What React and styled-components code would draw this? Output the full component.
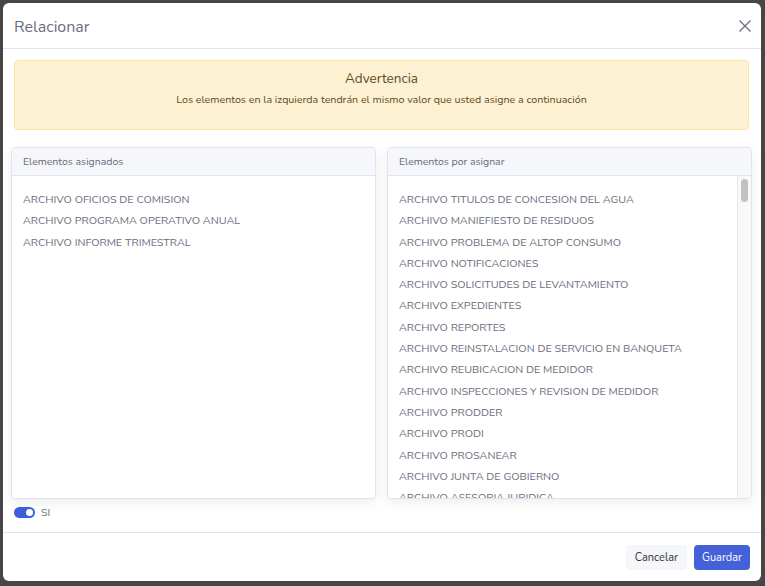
import styled, { createGlobalStyle } from "styled-components";
import { useState } from "react";

const GlobalStyle = createGlobalStyle`
  html, body {
    margin: 0;
    padding: 0;
    background: #464646;
    font-family: "Nunito", Lato, "Open Sans", sans-serif;
  }
`;

const Overlay = styled.div`
  width: 765px;
  height: 586px;
  padding: 3px 4px 5px 3px;
  box-sizing: border-box;
  background: #464646;
`;

const Modal = styled.div`
  width: 758px;
  height: 578px;
  background: #fff;
  border-radius: 6px;
  display: flex;
  flex-direction: column;
  overflow: hidden;
`;

const Header = styled.div`
  height: 45px;
  flex-shrink: 0;
  display: flex;
  align-items: center;
  justify-content: space-between;
  padding: 0 9px 0 11px;
  border-bottom: 1px solid #e3e3ee;
`;

const Title = styled.h5`
  margin: 0;
  font-size: 16px;
  font-weight: 400;
  color: #6c6e7e;
  padding-top: 2px;
`;

const CloseBtn = styled.button`
  border: 0;
  background: none;
  padding: 0;
  width: 14px;
  height: 14px;
  color: #6c6e7e;
  cursor: pointer;
  display: flex;
`;

const Body = styled.div`
  flex: 1;
  padding: 11px 12px 0 11px;
  display: flex;
  flex-direction: column;
`;

const Alert = styled.div`
  height: 70px;
  box-sizing: border-box;
  background: #fdf1d3;
  border: 1px solid #f9e3a6;
  border-radius: 4px;
  color: #5f4a1e;
  text-align: center;
  padding-top: 9px;
`;

const AlertTitle = styled.div`
  font-size: 13.5px;
  line-height: 18px;
`;

const AlertText = styled.div`
  font-size: 10.7px;
  margin-top: 4px;
`;

const Columns = styled.div`
  display: grid;
  grid-template-columns: 1fr 1fr;
  gap: 11px;
  margin: 17px -3px 0;
`;

const Panel = styled.div`
  height: 352px;
  box-sizing: border-box;
  border: 1px solid #e2e3ee;
  border-radius: 4px;
  display: flex;
  flex-direction: column;
  box-shadow: 0 4px 12px rgba(0, 0, 0, 0.07);
  overflow: hidden;
`;

const PanelHead = styled.div`
  height: 27px;
  flex-shrink: 0;
  background: #f6f7fb;
  border-bottom: 1px solid #e2e3ee;
  display: flex;
  align-items: center;
  padding: 0 11px;
  font-size: 10.5px;
  color: #666a78;
`;

const PanelBody = styled.div`
  flex: 1;
  display: flex;
  min-height: 0;
`;

const List = styled.ul`
  flex: 1;
  margin: 0;
  padding: 13px 11px 0;
  list-style: none;
  overflow: hidden;
`;

const Item = styled.li`
  font-size: 10.8px;
  line-height: 21.3px;
  color: #6a6c7c;
  white-space: nowrap;
`;

const ScrollTrack = styled.div`
  width: 14px;
  flex-shrink: 0;
  background: #f9f9f9;
  border-left: 1px solid #e6e6ec;
  padding: 3px 3px 0 3px;
  box-sizing: border-box;
`;

const ScrollThumb = styled.div`
  height: 23px;
  border-radius: 4px;
  background: #c2c2c2;
`;

const ToggleRow = styled.label`
  display: flex;
  align-items: center;
  gap: 6px;
  margin-top: 8px;
  font-size: 10.5px;
  color: #6c6e7e;
  line-height: 11px;
`;

const Switch = styled.span`
  width: 21px;
  height: 11px;
  border-radius: 6px;
  background: ${(p) => (p.$on ? "#3d5fd9" : "#ccc")};
  position: relative;

  &::after {
    content: "";
    position: absolute;
    top: 2px;
    left: ${(p) => (p.$on ? "12px" : "2px")};
    width: 7px;
    height: 7px;
    border-radius: 50%;
    background: #fff;
  }
`;

const Footer = styled.div`
  height: 47px;
  flex-shrink: 0;
  border-top: 1px solid #e3e3ee;
  display: flex;
  align-items: center;
  justify-content: flex-end;
  gap: 7px;
  padding: 1px 11px 0;
`;

const Button = styled.button`
  height: 25px;
  border: 0;
  border-radius: 4px;
  padding: 0 ${(p) => (p.$primary ? "8px" : "9px")};
  font-family: inherit;
  font-size: 11px;
  background: ${(p) => (p.$primary ? "#4461d9" : "#f4f6fa")};
  color: ${(p) => (p.$primary ? "#fff" : "#333")};
  cursor: pointer;
`;

const assigned = [
  "ARCHIVO OFICIOS DE COMISION",
  "ARCHIVO PROGRAMA OPERATIVO ANUAL",
  "ARCHIVO INFORME TRIMESTRAL",
];

const pending = [
  "ARCHIVO TITULOS DE CONCESION DEL AGUA",
  "ARCHIVO MANIEFIESTO DE RESIDUOS",
  "ARCHIVO PROBLEMA DE ALTOP CONSUMO",
  "ARCHIVO NOTIFICACIONES",
  "ARCHIVO SOLICITUDES DE LEVANTAMIENTO",
  "ARCHIVO EXPEDIENTES",
  "ARCHIVO REPORTES",
  "ARCHIVO REINSTALACION DE SERVICIO EN BANQUETA",
  "ARCHIVO REUBICACION DE MEDIDOR",
  "ARCHIVO INSPECCIONES Y REVISION DE MEDIDOR",
  "ARCHIVO PRODDER",
  "ARCHIVO PRODI",
  "ARCHIVO PROSANEAR",
  "ARCHIVO JUNTA DE GOBIERNO",
  "ARCHIVO ASESORIA JURIDICA",
];

function App() {
  const [on, setOn] = useState(true);

  return (
    <Overlay>
      <GlobalStyle />
      <Modal>
        <Header>
          <Title>Relacionar</Title>
          <CloseBtn aria-label="Cerrar">
            <svg viewBox="0 0 14 14" width="14" height="14">
              <path
                d="M1.5 1.5l11 11M12.5 1.5l-11 11"
                stroke="currentColor"
                strokeWidth="1.3"
                fill="none"
              />
            </svg>
          </CloseBtn>
        </Header>
        <Body>
          <Alert>
            <AlertTitle>Advertencia</AlertTitle>
            <AlertText>
              Los elementos en la izquierda tendrán el mismo valor que usted
              asigne a continuación
            </AlertText>
          </Alert>
          <Columns>
            <Panel>
              <PanelHead>Elementos asignados</PanelHead>
              <PanelBody>
                <List>
                  {assigned.map((a) => (
                    <Item key={a}>{a}</Item>
                  ))}
                </List>
              </PanelBody>
            </Panel>
            <Panel>
              <PanelHead>Elementos por asignar</PanelHead>
              <PanelBody>
                <List>
                  {pending.map((a) => (
                    <Item key={a}>{a}</Item>
                  ))}
                </List>
                <ScrollTrack>
                  <ScrollThumb />
                </ScrollTrack>
              </PanelBody>
            </Panel>
          </Columns>
          <ToggleRow onClick={() => setOn(!on)}>
            <Switch $on={on} />
            SI
          </ToggleRow>
        </Body>
        <Footer>
          <Button>Cancelar</Button>
          <Button $primary>Guardar</Button>
        </Footer>
      </Modal>
    </Overlay>
  );
}

export default App;
